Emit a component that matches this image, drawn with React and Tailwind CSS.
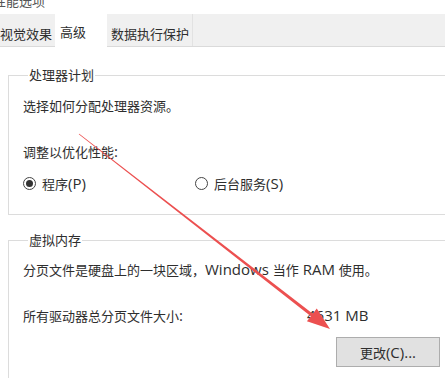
import React from 'react'

const font = { fontFamily: '"Noto Sans CJK SC", "Noto Sans", sans-serif' }

// Latin runs are rendered a touch larger, like Segoe UI beside YaHei
const L = ({ children }) => (
  <span className="text-[15px]" style={{ fontFamily: '"Open Sans", "Noto Sans", sans-serif' }}>
    {children}
  </span>
)

const Radio = ({ checked, label }) => (
  <div className="flex items-center gap-[6px]">
    <span className="w-[13px] h-[13px] rounded-full border border-[#444] bg-white flex items-center justify-center">
      {checked && <span className="w-[7px] h-[7px] rounded-full bg-[#333]" />}
    </span>
    <span>{label}</span>
  </div>
)

const Arrow = () => {
  const sx = 79, sy = 134, tx = 330, ty = 329
  const len = Math.hypot(tx - sx, ty - sy)
  const ux = (tx - sx) / len, uy = (ty - sy) / len
  const px = -uy, py = ux
  const hl = 23, hw = 8
  const bx = tx - ux * hl, by = ty - uy * hl
  const pts = [
    [sx + px * 0.4, sy + py * 0.4],
    [bx + px * 1.6, by + py * 1.6],
    [bx + px * hw, by + py * hw],
    [tx, ty],
    [bx - px * hw, by - py * hw],
    [bx - px * 1.6, by - py * 1.6],
    [sx - px * 0.4, sy - py * 0.4],
  ]
  return (
    <svg className="absolute inset-0 pointer-events-none" width="445" height="378">
      <polygon points={pts.map((p) => p.join(',')).join(' ')} fill="#ec5050" />
    </svg>
  )
}

export default function App() {
  return (
    <div className="relative w-[445px] h-[378px] overflow-hidden bg-white text-[13px] text-[#2e2e2e]" style={font}>
      {/* cut-off window title */}
      <div className="h-[14px] overflow-hidden">
        <div className="-mt-[8px] -ml-[7px] leading-[18px] text-[#555]">性能选项</div>
      </div>

      {/* tab strip */}
      <div className="h-[33px] bg-[#f0f0f0] border-b border-[#dadada] flex items-stretch">
        <div className="w-[55px] flex items-center pt-[7px]">视觉效果</div>
        <div className="w-[52px] bg-white flex items-center pl-[5px] pt-[3px] -mb-px">高级</div>
        <div className="flex items-center pl-[4px] pr-[3px] pt-[8px] border-r border-[#e2e2e2]">数据执行保护</div>
      </div>

      <div className="pl-[8px]">
        <fieldset className="w-[460px] mt-[19px] border border-[#dcdcdc] pl-[14px] pb-[21px]">
          <legend className="ml-[5px] px-px leading-[18px]">处理器计划</legend>
          <div className="mt-[13px] leading-[18px]">选择如何分配处理器资源。</div>
          <div className="mt-[27px] leading-[18px]">调整以优化性能<L>:</L></div>
          <div className="mt-[13px] leading-[18px] flex">
            <div className="w-[172px]">
              <Radio checked label={<>程序<L>(P)</L></>} />
            </div>
            <Radio label={<>后台服务<L>(S)</L></>} />
          </div>
        </fieldset>

        <fieldset className="w-[460px] h-[200px] mt-[16px] border border-[#dcdcdc] pl-[14px]">
          <legend className="ml-[5px] px-px leading-[18px]">虚拟内存</legend>
          <div className="mt-[11px] leading-[18px]">
            分页文件是硬盘上的一块区域，<L>Windows </L>当作<L> RAM </L>使用。
          </div>
          <div className="mt-[27px] leading-[18px] flex">
            <div className="w-[284px]">所有驱动器总分页文件大小<L>:</L></div>
            <div><L>4631 MB</L></div>
          </div>
          <button className="mt-[12px] ml-[313px] w-[104px] h-[30px] bg-[#e1e1e1] border border-[#adadad] text-[13px] text-[#2e2e2e] leading-none">
            更改<L>(C)...</L>
          </button>
        </fieldset>
      </div>

      <Arrow />
    </div>
  )
}
